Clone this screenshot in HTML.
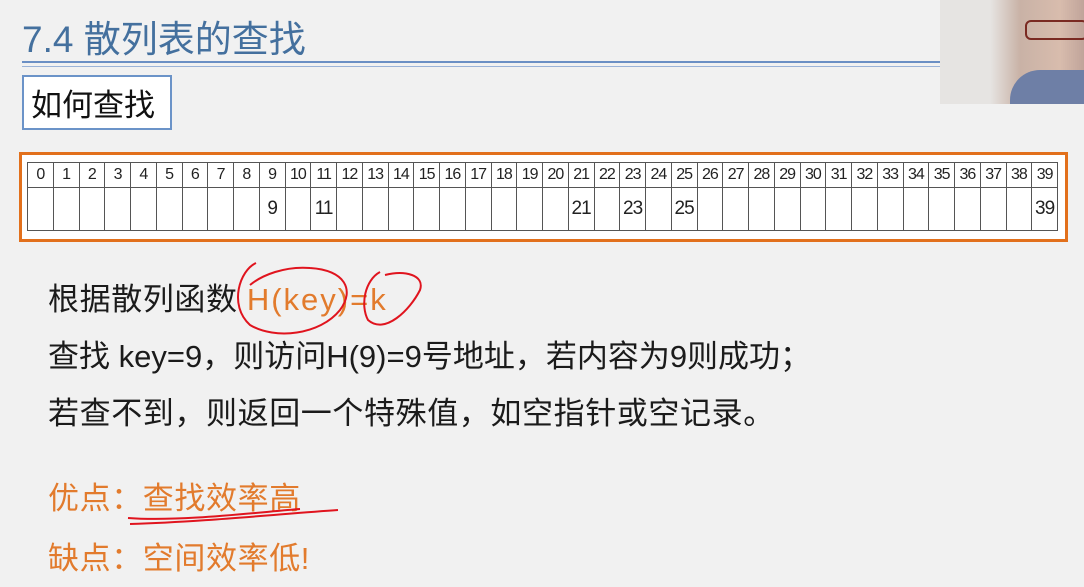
<!DOCTYPE html>
<html><head><meta charset="utf-8"><style>
body{margin:0;width:1084px;height:587px;background:#f1f1f1;position:relative;overflow:hidden;font-family:"Liberation Sans","Noto Sans CJK SC",sans-serif}
.a{position:absolute;white-space:nowrap}
table{border-collapse:collapse;position:absolute;left:27px;top:162px;background:#fff}
td{border:1px solid #555;width:24.75px;padding:0;text-align:center;font-size:16px;color:#222;letter-spacing:-1px}
tr.h td{height:24px}
tr.d td{height:42px;font-size:19px}
.t{color:#1b1b1b;font-size:31px;letter-spacing:0.6px}
.o{color:#e27b2d}
</style></head><body>
<div class="a" style="left:22px;top:9px;font-size:37px;color:#44709e">7.4 散列表的查找</div>
<div class="a" style="left:22px;top:61px;width:918px;height:2px;background:#6b8fc4"></div>
<div class="a" style="left:22px;top:66px;width:918px;height:1px;background:#9bb3d8"></div>
<div class="a" style="left:22px;top:75px;width:146px;height:51px;border:2px solid #6b93c8;background:#fff"></div>
<div class="a" style="left:31px;top:80px;font-size:31px;color:#111">如何查找</div>
<div class="a" style="left:940px;top:0;width:144px;height:104px;background:linear-gradient(90deg,#e6e4e2 0,#e6e4e2 50px,#c9b2a6 80px,#d8bcad 120px,#c0a49a 144px)"></div>
<div class="a" style="left:1010px;top:70px;width:74px;height:34px;background:#6e7fa6;border-radius:30px 0 0 0"></div>
<div class="a" style="left:1025px;top:20px;width:59px;height:16px;border:2px solid #7a2a22;border-radius:6px"></div>
<div class="a" style="left:19px;top:152px;width:1043px;height:84px;border:3px solid #e2701c;background:#fff"></div>
<table>
<tr class="h"><td>0</td><td>1</td><td>2</td><td>3</td><td>4</td><td>5</td><td>6</td><td>7</td><td>8</td><td>9</td><td>10</td><td>11</td><td>12</td><td>13</td><td>14</td><td>15</td><td>16</td><td>17</td><td>18</td><td>19</td><td>20</td><td>21</td><td>22</td><td>23</td><td>24</td><td>25</td><td>26</td><td>27</td><td>28</td><td>29</td><td>30</td><td>31</td><td>32</td><td>33</td><td>34</td><td>35</td><td>36</td><td>37</td><td>38</td><td>39</td></tr>
<tr class="d"><td></td><td></td><td></td><td></td><td></td><td></td><td></td><td></td><td></td><td>9</td><td></td><td>11</td><td></td><td></td><td></td><td></td><td></td><td></td><td></td><td></td><td></td><td>21</td><td></td><td>23</td><td></td><td>25</td><td></td><td></td><td></td><td></td><td></td><td></td><td></td><td></td><td></td><td></td><td></td><td></td><td></td><td>39</td></tr>
</table>
<div class="a t" style="left:48px;top:274px">根据散列函数 <span class="o" style="letter-spacing:2px">H(key)=k</span></div>
<div class="a t" style="left:48px;top:331px;letter-spacing:0">查找 key=9，则访问H(9)=9号地址，若内容为9则成功；</div>
<div class="a t" style="left:48px;top:388px">若查不到，则返回一个特殊值，如空指针或空记录。</div>
<div class="a t o" style="left:48px;top:473px">优点：查找效率高</div>
<div class="a t o" style="left:48px;top:533px">缺点：空间效率低!</div>
<svg class="a" style="left:0;top:0" width="1084" height="587"><g fill="none" stroke="#e0141e" stroke-width="2">
<path d="M256 263 C240 270 228 305 250 325 C275 340 320 335 340 310 C355 290 345 270 310 268 C285 266 262 275 250 285"/>
<path d="M380 272 C365 280 360 305 368 320 C385 335 410 310 420 290 C425 275 405 270 385 275"/>
<path d="M128 518 C180 522 260 512 300 509 M130 524 C200 522 280 514 338 510"/>
</g></svg>
</body></html>
